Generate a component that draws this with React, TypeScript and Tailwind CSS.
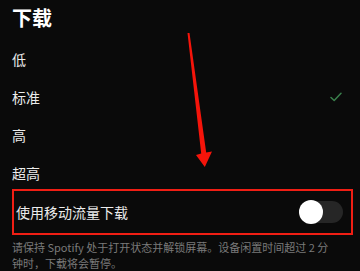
import React from "react";

export default function App() {
  const rows = ["低", "标准", "高", "超高"];
  return (
    <div
      className="relative w-[360px] h-[271px] overflow-hidden bg-[#0a0a0a] text-[#ececec]"
      style={{ fontFamily: '"Noto Sans CJK SC", "Noto Sans", "Liberation Sans", sans-serif' }}
    >
      <div className="pt-[5px] pl-[12px] text-[20px] font-bold leading-[26px] text-white">下载</div>
      <div className="mt-[9px]">
        {rows.map((r, i) => (
          <div key={r} className="flex h-[38px] items-center justify-between pl-[12px] pr-[18px] text-[14px]">
            <span>{r}</span>
            {i === 1 && (
              <svg width="12" height="10" viewBox="0 0 12 10" fill="none">
                <path d="M1 5.5 L4.2 8.5 L11 1.2" stroke="#3a7f4c" strokeWidth="1.5" strokeLinecap="round" strokeLinejoin="round" />
              </svg>
            )}
          </div>
        ))}
      </div>
      <div className="-mt-[3px] ml-[12px] flex h-[46px] w-[341px] items-center justify-between border-2 border-[#f01e14] pl-[2px] pr-[8px]">
        <span className="text-[14px] text-[#ececec]">使用移动流量下载</span>
        <div className="relative h-[22px] w-[44px] rounded-full bg-[#262626]">
          <div className="absolute -top-[1px] left-0 h-[24px] w-[24px] rounded-full bg-white" />
        </div>
      </div>
      <div className="mt-[4px] px-[12px] text-[11px] leading-[16px] text-[#7a7a7a] whitespace-nowrap">
        <div>请保持 Spotify 处于打开状态并解锁屏幕。设备闲置时间超过 2 分</div>
        <div>钟时，下载将会暂停。</div>
      </div>
      <svg className="absolute left-0 top-0" width="360" height="271" viewBox="0 0 360 271">
        <polygon
          points="187.5,33 189.5,33 206.2,152.5 212,151.5 204.8,167 196,155 201.2,153.5"
          fill="#f5140a"
        />
      </svg>
    </div>
  );
}
